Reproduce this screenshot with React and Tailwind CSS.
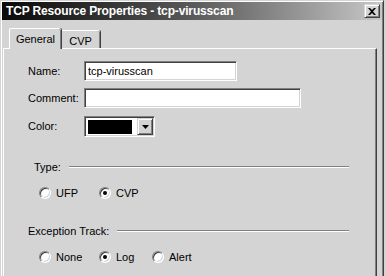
import React from 'react';

const sunken = 'border border-t-[#808080] border-l-[#808080] border-b-white border-r-white shadow-[inset_1px_1px_0_#404040,inset_-1px_-1px_0_#d4d4d4]';
const raised = 'border border-t-[#d4d4d4] border-l-[#d4d4d4] border-b-[#404040] border-r-[#404040] shadow-[inset_1px_1px_0_#fff,inset_-1px_-1px_0_#808080]';

const Radio = ({ checked, label }) => (
  <div className="flex items-center h-[14px]">
    <span className="w-[12px] h-[12px] rounded-full bg-white flex items-center justify-center border border-t-[#808080] border-l-[#808080] border-b-white border-r-white shadow-[inset_1px_1px_0_#404040,inset_-1px_-1px_0_#d4d4d4]">
      {checked && <span className="w-[4px] h-[4px] rounded-full bg-black" />}
    </span>
    <span className="ml-[5px]">{label}</span>
  </div>
);

const Etched = () => (
  <div className="flex-1 h-[2px] border-t border-t-[#808080] border-b border-b-white" />
);

const Field = ({ label, children, className = '' }) => (
  <div className={`flex items-center ${className}`}>
    <span className="w-[56px]">{label}</span>
    {children}
  </div>
);

export default function App() {
  return (
    <div className="w-[386px] h-[276px] overflow-hidden bg-[#d4d4d4] font-['Liberation_Sans',Arial,sans-serif] text-[11px] text-black">
      <div className="w-[384px] h-[278px] p-[1px] border border-[#d4d4d4] border-r-[#404040] shadow-[inset_1px_1px_0_#fff,inset_-1px_0_0_#808080]">
        {/* Title bar */}
        <div className="h-[18px] flex items-center justify-between pl-[4px] pr-[2px] bg-gradient-to-r from-[#0a0a0a] via-[#5a5a5a] to-[#c8c8c8]">
          <span className="text-white font-bold text-[12px] tracking-[-0.15px] leading-none">TCP Resource Properties - tcp-virusscan</span>
          <button className={`w-[16px] h-[14px] bg-[#d4d4d4] flex items-center justify-center ${raised}`}>
            <svg width="8" height="7" viewBox="0 0 8 7">
              <path d="M0 0h2l2 2 2-2h2L5 3.5 8 7H6L4 5 2 7H0l3-3.5z" fill="#000" />
            </svg>
          </button>
        </div>

        {/* Tabs */}
        <div className="mt-[8px] flex items-end pl-[7px]">
          <div className="relative z-10 -mb-[1px] w-[52px] h-[21px] bg-[#d4d4d4] border-t border-l border-white rounded-tl-[2px] rounded-tr-[2px] shadow-[1px_0_0_#404040,inset_-1px_0_0_#808080] flex items-start justify-center pt-[2px]">
            General
          </div>
          <div className="w-[39px] h-[18px] border-t border-white rounded-tr-[2px] shadow-[1px_0_0_#404040,inset_-1px_0_0_#808080] flex items-start justify-center pt-[2px]">
            CVP
          </div>
        </div>

        {/* Panel */}
        <div className="ml-[1px] w-[374px] h-[240px] border-t border-l border-white border-r border-r-[#404040] shadow-[inset_-1px_0_0_#808080] pl-[24px] pt-[12px]">
          <Field label="Name:">
            <div className={`w-[153px] h-[20px] bg-white pl-[3px] flex items-center ${sunken}`}>tcp-virusscan</div>
          </Field>
          <Field label="Comment:" className="mt-[7px]">
            <div className={`w-[217px] h-[20px] bg-white ${sunken}`} />
          </Field>
          <Field label="Color:" className="mt-[8px]">
            <div className={`w-[71px] h-[21px] bg-white flex items-center pl-[3px] pr-[1px] ${sunken}`}>
              <div className="w-[44px] h-[14px] bg-black" />
              <div className={`ml-auto w-[16px] h-[17px] bg-[#d4d4d4] flex items-center justify-center ${raised}`}>
                <svg width="7" height="4" viewBox="0 0 7 4"><path d="M0 0h7L3.5 4z" fill="#000" /></svg>
              </div>
            </div>
          </Field>

          <div className="mt-[23px] ml-[6px] w-[315px] h-[14px] flex items-center">
            <span className="mr-[8px]">Type:</span>
            <Etched />
          </div>
          <div className="mt-[12px] ml-[11px] flex">
            <div className="w-[60px]"><Radio label="UFP" /></div>
            <Radio checked label="CVP" />
          </div>

          <div className="mt-[24px] w-[321px] h-[14px] flex items-center">
            <span className="mr-[8px]">Exception Track:</span>
            <Etched />
          </div>
          <div className="mt-[12px] ml-[11px] flex">
            <div className="w-[60px]"><Radio label="None" /></div>
            <div className="w-[53px]"><Radio checked label="Log" /></div>
            <Radio label="Alert" />
          </div>
        </div>
      </div>
    </div>
  );
}
